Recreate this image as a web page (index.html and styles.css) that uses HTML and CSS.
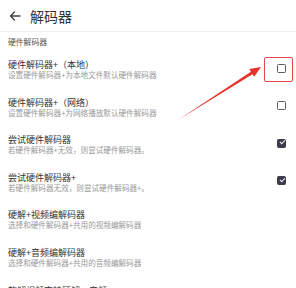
FILE: index.html
```html
<!DOCTYPE html>
<html lang="zh">
<head>
  <meta charset="UTF-8" />
  <meta name="viewport" content="width=device-width, initial-scale=1.0" />
  <title>解码器</title>
  <link rel="stylesheet" href="styles.css">
</head>
<body>
  <header class="topbar">
    <svg class="back" width="12" height="12" viewBox="0 0 12 12">
      <path d="M11 6H1.5M5.5 2L1.5 6l4 4" fill="none" stroke="#444" stroke-width="1.4" stroke-linecap="round" stroke-linejoin="round"/>
    </svg>
    <h1 class="title">解码器</h1>
  </header>

  <div class="group-label">硬件解码器</div>

  <ul class="prefs">
    <li class="pref">
      <div class="pref-text">
        <div class="pref-title">硬件解码器+（本地）</div>
        <div class="pref-sub">设置硬件解码器+为本地文件默认硬件解码器</div>
      </div>
      <span class="check"></span>
    </li>
    <li class="pref">
      <div class="pref-text">
        <div class="pref-title">硬件解码器+（网络）</div>
        <div class="pref-sub">设置硬件解码器+为网络播放默认硬件解码器</div>
      </div>
      <span class="check"></span>
    </li>
    <li class="pref">
      <div class="pref-text">
        <div class="pref-title">尝试硬件解码器</div>
        <div class="pref-sub">若硬件解码器+无效，则尝试硬件解码器。</div>
      </div>
      <span class="check on"></span>
    </li>
    <li class="pref">
      <div class="pref-text">
        <div class="pref-title">尝试硬件解码器+</div>
        <div class="pref-sub">若硬件解码器无效，则尝试硬件解码器+。</div>
      </div>
      <span class="check on"></span>
    </li>
    <li class="pref">
      <div class="pref-text">
        <div class="pref-title">硬解+视频编解码器</div>
        <div class="pref-sub">选择和硬件解码器+共用的视频编解码器</div>
      </div>
    </li>
    <li class="pref">
      <div class="pref-text">
        <div class="pref-title">硬解+音频编解码器</div>
        <div class="pref-sub">选择和硬件解码器+共用的音频编解码器</div>
      </div>
    </li>
    <li class="pref">
      <div class="pref-text">
        <div class="pref-title">软解视频支持硬解，音频</div>
      </div>
    </li>
  </ul>

  <!-- annotation overlay -->
  <div class="mark-box"></div>
  <svg class="mark-arrow" width="296" height="288" viewBox="0 0 296 288">
    <polygon points="178,120 250.9,71.7 249.3,69.1 261,67 254.2,76.7 252.5,74.2" fill="#e8322c"/>
  </svg>
</body>
</html>
```

FILE: styles.css
```css
* { margin: 0; padding: 0; box-sizing: border-box; }
html,
body {
  height: 100%;
  background: #fff;
  font-family: "Noto Sans CJK SC", "Noto Sans", sans-serif;
  color: #333;
  overflow: hidden;
}
body { position: relative; }

.topbar {
  height: 32px;
  display: flex;
  align-items: center;
  padding-left: 9px;
  gap: 9px;
  border-bottom: 1px solid #f0f0f0;
}
.back { display: block; }
.title {
  font-size: 14px;
  font-weight: 400;
  color: #333;
  line-height: 1;
}

.group-label {
  height: 19px;
  line-height: 19px;
  padding-left: 8px;
  font-size: 7.8px;
  color: #555;
}

.prefs { list-style: none; }
.pref {
  height: 37.5px;
  display: flex;
  align-items: center;
  justify-content: space-between;
  padding: 0 10px 0 8px;
}
.pref-text {
  display: flex;
  flex-direction: column;
}
.pref-title {
  font-size: 9px;
  line-height: 11px;
  color: #333;
}
.pref-sub {
  font-size: 7.6px;
  line-height: 10px;
  color: #9a9a9a;
}
.pref:last-child .pref-text { align-self: flex-start; padding-top: 9px; }

.check {
  width: 9px;
  height: 9px;
  margin-bottom: 3px;
  border: 1.4px solid #5a5a5a;
  border-radius: 1.5px;
  position: relative;
}
.check.on {
  background: #3b3b4d;
  border-color: #3b3b4d;
}
.check.on::after {
  content: "";
  position: absolute;
  left: 1.6px;
  top: 0.4px;
  width: 4px;
  height: 2.2px;
  border-left: 1.2px solid #fff;
  border-bottom: 1.2px solid #fff;
  transform: rotate(-45deg);
}

.mark-box {
  position: absolute;
  left: 264px;
  top: 57px;
  width: 29px;
  height: 25px;
  border: 1.5px solid #e04a4a;
  border-radius: 2px;
}
.mark-arrow {
  position: absolute;
  left: 0;
  top: 0;
  pointer-events: none;
}
```
